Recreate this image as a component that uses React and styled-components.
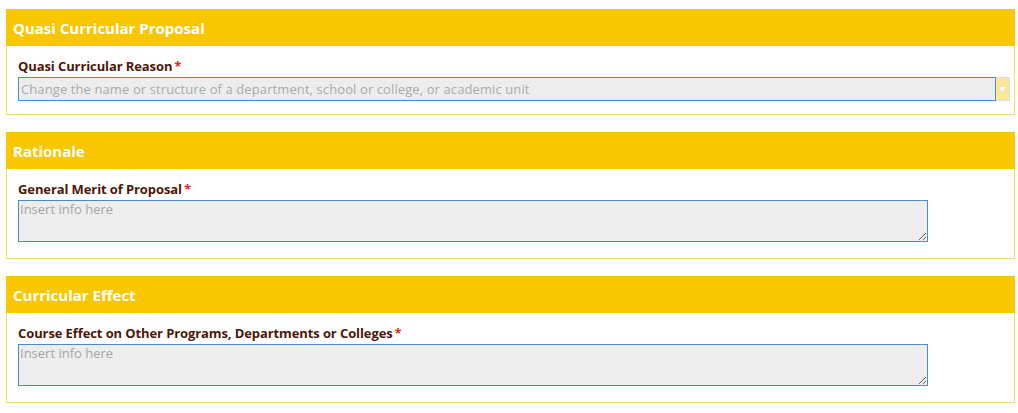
import React from "react";
import styled, { createGlobalStyle } from "styled-components";

const Global = createGlobalStyle`
  html, body { margin: 0; padding: 0; background: #fff; }
  body { font-family: "Open Sans", "DejaVu Sans", sans-serif; }
  * { box-sizing: border-box; }
`;

const Page = styled.div`
  padding: 9px 3px 0 6px;
  display: flex;
  flex-direction: column;
  gap: 17px;
`;

const Panel = styled.section`
  border: 1px solid #f3dc6e;
  border-top: none;
  background: #fff;
`;

const Header = styled.div`
  background: #f9c700;
  height: 37px;
  margin: 0 -1px;
  display: flex;
  align-items: center;
  padding-left: 7px;
  color: #fff;
  font-weight: 700;
  font-size: 15px;
`;

const Body = styled.div`
  padding: 11px 4px ${(p) => (p.$tall ? "16px" : "13px")} 11px;
`;

const Label = styled.div`
  font-size: 13px;
  font-weight: 700;
  color: #4d1607;
  line-height: 18px;
  margin-bottom: 2px;
  letter-spacing: -0.1px;
  span { color: #e0262a; margin-left: 2px; }
`;

const SelectRow = styled.div`
  display: flex;
  align-items: stretch;
  height: 24px;
`;

const SelectBox = styled.div`
  flex: 1;
  border: 1px solid #4a8ad0;
  background: #ededed;
  color: #a9abae;
  font-size: 13px;
  letter-spacing: 0.1px;
  padding: 0 2px;
  display: flex;
  align-items: center;
  white-space: nowrap;
  overflow: hidden;
`;

const ArrowBtn = styled.div`
  width: 14px;
  background: #fbe89a;
  border: 1px solid #d9dde0;
  border-left: none;
  display: flex;
  align-items: center;
  justify-content: center;
`;

const TextArea = styled.textarea`
  display: block;
  width: 910px;
  height: 42px;
  border: 1px solid #4a8ad0;
  background: #ededed;
  font-family: "Open Sans", "DejaVu Sans", sans-serif;
  font-size: 13px;
  line-height: 17px;
  padding: 0 1px;
  margin: 1px 0 0 0;
  resize: vertical;
  outline: none;
  &::placeholder { color: #a6a6a6; }
`;

function Section({ title, label, tall, children }) {
  return (
    <Panel>
      <Header>{title}</Header>
      <Body $tall={tall}>
        <Label>
          {label}
          <span>*</span>
        </Label>
        {children}
      </Body>
    </Panel>
  );
}

export default function App() {
  return (
    <>
      <Global />
      <Page>
        <Section title="Quasi Curricular Proposal" label="Quasi Curricular Reason">
          <SelectRow>
            <SelectBox>
              Change the name or structure of a department, school or college, or academic unit
            </SelectBox>
            <ArrowBtn>
              <svg width="7" height="5" viewBox="0 0 7 5">
                <path d="M0 0 L7 0 L3.5 5 Z" fill="#fff" />
              </svg>
            </ArrowBtn>
          </SelectRow>
        </Section>
        <Section title="Rationale" label="General Merit of Proposal" tall>
          <TextArea placeholder="Insert info here" />
        </Section>
        <Section
          title="Curricular Effect"
          label="Course Effect on Other Programs, Departments or Colleges"
          tall
        >
          <TextArea placeholder="Insert info here" />
        </Section>
      </Page>
    </>
  );
}
